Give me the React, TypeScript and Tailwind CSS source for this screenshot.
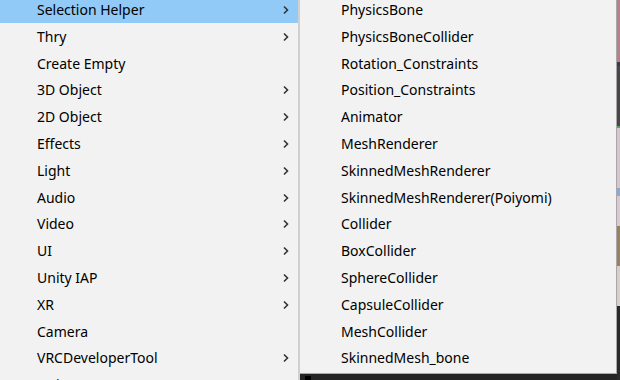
import React from 'react';

const mainItems: { label: string; sub?: boolean }[] = [
  { label: 'Selection Helper', sub: true },
  { label: 'Thry', sub: true },
  { label: 'Create Empty' },
  { label: '3D Object', sub: true },
  { label: '2D Object', sub: true },
  { label: 'Effects', sub: true },
  { label: 'Light', sub: true },
  { label: 'Audio', sub: true },
  { label: 'Video', sub: true },
  { label: 'UI', sub: true },
  { label: 'Unity IAP', sub: true },
  { label: 'XR', sub: true },
  { label: 'Camera' },
  { label: 'VRCDeveloperTool', sub: true },
  { label: 'Unity' },
];

const subItems = [
  'PhysicsBone',
  'PhysicsBoneCollider',
  'Rotation_Constraints',
  'Position_Constraints',
  'Animator',
  'MeshRenderer',
  'SkinnedMeshRenderer',
  'SkinnedMeshRenderer(Poiyomi)',
  'Collider',
  'BoxCollider',
  'SphereCollider',
  'CapsuleCollider',
  'MeshCollider',
  'SkinnedMesh_bone',
];

const Chevron = () => (
  <svg width="8" height="10" viewBox="0 0 8 10" className="text-[#333]">
    <polyline points="2,1.5 5.5,5 2,8.5" fill="none" stroke="currentColor" strokeWidth="1.6" />
  </svg>
);

const App: React.FC = () => {
  return (
    <div
      className="w-[620px] h-[380px] overflow-hidden flex bg-[#262626] text-[14px] text-black"
      style={{ fontFamily: '"Noto Sans", "Noto Sans CJK KR", sans-serif' }}
    >
      {/* Main context menu */}
      <div className="w-[300px] h-[380px] shrink-0 bg-[#f2f2f2] border-r-2 border-[#d0d0d0] overflow-hidden">
        <div className="-mt-[3.4px]">
          {mainItems.map((item, i) => (
            <div
              key={item.label}
              className={`h-[26.8px] flex items-center pl-[37px] pr-[8px] ${i === 0 ? 'bg-[#91c9f7]' : ''}`}
            >
              <span className="flex-1 leading-none">{item.label}</span>
              {item.sub && <Chevron />}
            </div>
          ))}
        </div>
      </div>

      {/* Sub menu */}
      <div className="w-[317px] shrink-0 flex flex-col">
        <div className="h-[374px] bg-[#f2f2f2] border-r border-b border-[#a8a8a8] overflow-hidden">
          <div className="-mt-[3.4px]">
            {subItems.map((label) => (
              <div key={label} className="h-[26.8px] flex items-center pl-[41px]">
                <span className="leading-none">{label}</span>
              </div>
            ))}
          </div>
        </div>
        <div className="flex-1 bg-[#242424] flex">
          <div className="w-[6px] h-[4px] mt-[2px] ml-[5px] bg-black" />
        </div>
      </div>

      {/* Background scene peeking through */}
      <div className="flex-1 flex flex-col">
        <div className="h-[62px] bg-[#b7808c]" />
        <div className="h-[4px] bg-[#3a3a4a]" />
        <div className="h-[60px] bg-[#4a4648]" />
        <div className="h-[2px] bg-[#5aa060]" />
        <div className="h-[60px] bg-[#d8c6cf]" />
        <div className="h-[8px] bg-[#8aa8d8]" />
        <div className="h-[30px] bg-[#dac8d2]" />
        <div className="h-[40px] bg-[#9a8060]" />
        <div className="h-[40px] bg-[#d8d0c8]" />
        <div className="flex-1 bg-[#2a2a2a]" />
      </div>
    </div>
  );
};

export default App;
